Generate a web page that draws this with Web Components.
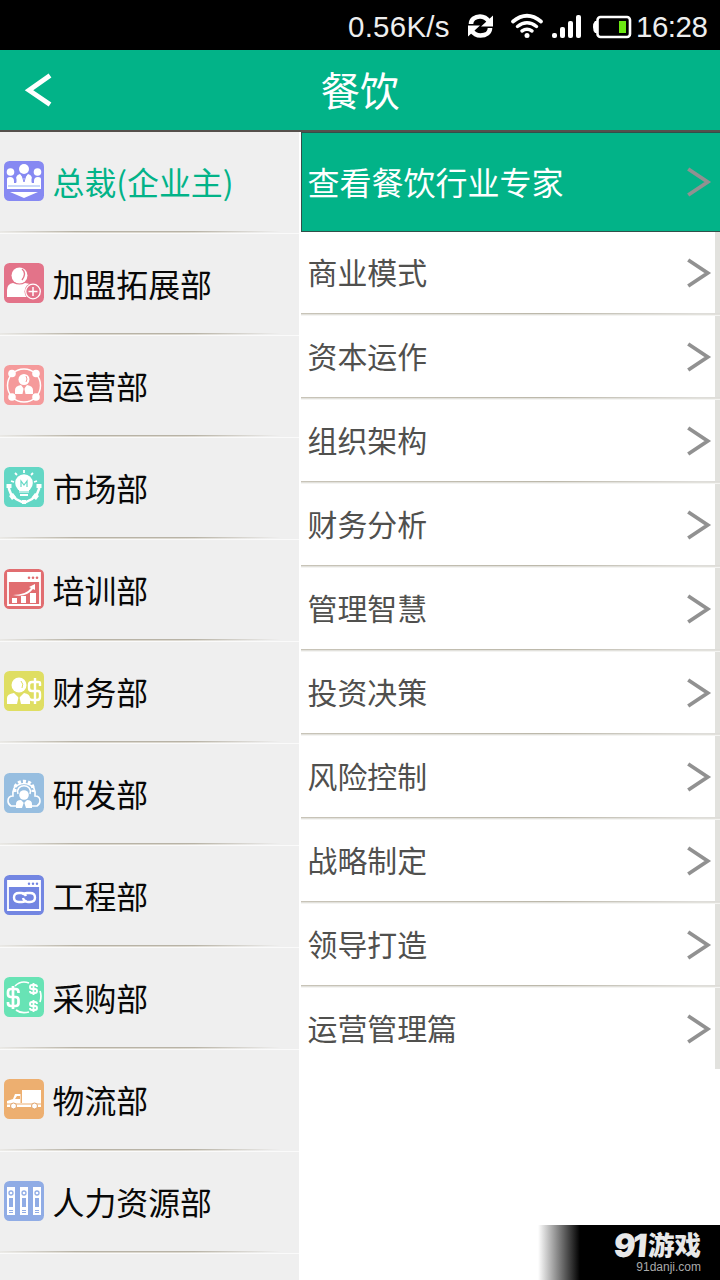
<!DOCTYPE html>
<html lang="zh-CN">
<head>
<meta charset="utf-8">
<title>餐饮</title>
<style>
html,body{margin:0;background:#fff}
body{width:720px;height:1280px;overflow:hidden;font-family:"Noto Sans CJK SC",sans-serif}
</style>
</head>
<body>
<app-screen></app-screen>
<script>
const define = (name, html) => customElements.define(name, class extends HTMLElement {
  constructor() {
    super();
    this.attachShadow({mode: 'open'}).innerHTML = typeof html === 'function' ? html(this) : html;
  }
});

define('status-bar', `<style>
:host{display:flex;height:50px;background:#000;color:#eee;font:29.5px/50px "Liberation Sans",sans-serif;box-sizing:border-box;padding:2px 12px 0 348px;white-space:nowrap}
span{display:block;height:48px}.speed{width:120px;letter-spacing:.25px}.time{width:72px;letter-spacing:-.5px}
svg{display:block;width:168px;height:48px;flex:none}
</style><span class="speed">0.56K/s</span>
<svg viewBox="468 2 168 48"><g fill="none" stroke="#fff">
<path d="M471 24c0-4.500 4-7.500 9-7.500 4 0 7 2 9 5M490 28c0 4.500-4 7.500-9.500 7.500-4 0-7-2-9-5" stroke-width="4.600"/>
<g stroke-linecap="round"><path d="M513 21.500Q527 10 541 21.500" stroke-width="3.800"/><path d="M517.500 26.500Q527 19 536.500 26.500" stroke-width="3.500"/><path d="M522 31Q527 27.500 532 31" stroke-width="3.400"/></g></g>
<g fill="#fff"><path d="M493 15.500v11h-12zM468 36.500V25.500h12z"/><circle cx="527" cy="35.500" r="2.500"/>
<rect x="552" y="33" width="5" height="5" rx="2"/><rect x="560" y="27" width="5" height="11" rx="2"/><rect x="568" y="21" width="5" height="17" rx="2"/><rect x="576" y="15" width="5" height="23" rx="2"/>
<path d="M595 21h3v12h-3q-2-2-2-6t2-6z"/></g><rect x="597.500" y="17" width="32.500" height="20" rx="3" fill="none" stroke="#fff" stroke-width="2.600"/><rect x="619" y="21" width="7" height="12" fill="#6ce813"/></svg>
<span class="time">16:28</span>`);

define('title-bar', `<style>
:host{display:grid;grid-template-columns:80px 1fr 80px;height:82px;box-sizing:border-box;background:#02b388;border-bottom:2px solid #55504c;color:#fff;align-items:start}
h1{margin:0;font-size:39.500px;font-weight:400;line-height:78px;height:80px;text-align:center}
svg{display:block;width:80px;height:80px}
</style><svg viewBox="0 0 80 80"><path d="M50 25.500 29 40.200 50 54.500" fill="none" stroke="#fff" stroke-width="4.800"/></svg><h1><slot></slot></h1>`);

const icons = {
boss: ['#8689f2', `<g fill="#fff"><circle cx="20" cy="8" r="5"/><circle cx="6.500" cy="11" r="3.800"/><circle cx="33.500" cy="11" r="3.800"/><path d="M3 28v-10q0-2 3-2 4 0 4 4v2h2v-4q0-4 4-5l4 5 4-5q4 1 4 5v4h2v-2q0-4 4-4 3 0 3 2v10zM6 31h28l-14 6z"/></g><path d="M12 21.500v-4M28 21.500v-4M18 14l2 7 2-7" stroke="#8689f2" fill="none"/><path d="M4 25h32" stroke="#b9cdf7" stroke-width="1.500"/>`],
join: ['#e37389', `<g fill="#fff"><circle cx="15.500" cy="12.500" r="8"/><path d="M3 34V27q0-6 6-7 7 3 12 0 4 0 7 3v11z"/></g><path d="M18 6q5 4 0 11" fill="none" stroke="#e37389" stroke-width="1.300"/><circle cx="29" cy="28.500" r="8.500" fill="#e37389"/><circle cx="29" cy="28.500" r="7.300" fill="none" stroke="#fff" stroke-width="1.300"/><path d="M24.500 28.500h9M29 24v9" stroke="#fff" stroke-width="1.500"/>`],
operate: ['#f59a9b', `<circle cx="20" cy="20.500" r="16.500" fill="none" stroke="#fff" stroke-width="1.500"/><g fill="#fff"><circle cx="8" cy="8.500" r="3.800"/><circle cx="32" cy="8.500" r="3.800"/><circle cx="8" cy="32" r="3.800"/><circle cx="32" cy="32" r="3.800"/><circle cx="20" cy="14.500" r="5.500"/><path d="M11 29v-4q0-4 6-5l3 4 3-4q6 1 6 5v4z"/></g><path d="m20 22-1.500 7h3z" fill="#f59a9b"/><path d="M22 11q2 3 0 6" fill="none" stroke="#f59a9b"/>`],
market: ['#63d7c5', `<path d="M5 18v4l2 5 5 5 6 3h4l6-3 5-5 2-5v-4" fill="none" stroke="#fff" stroke-width="2.500"/><g fill="#fff"><path d="M2.500 17h5v4h-5zM32.500 17h5v4h-5zM5 29l4-3 3 4-4 3zM28 30l3-4 4 3-3 4zM18 33h4v4h-4zM15 22h10v4H15zM16 27h8v2h-8z"/><circle cx="20" cy="16" r="8.800"/></g><path d="M20 3v3M11 6l2 2M29 6l-2 2M7 14l3 1M33 14l-3 1" stroke="#fff" stroke-width="1.800"/><path d="M17 20v-6l3 4 3-4v6M15 25h10" fill="none" stroke="#63d7c5" stroke-width="1.200"/>`],
train: ['#e16d70', `<path d="M4 4h32v32H4z" fill="none" stroke="#fff" stroke-width="1.800"/><path d="M4 4h32v9H4z" fill="#fff"/><g fill="#e16d70"><circle cx="25" cy="8.800" r="1.300"/><circle cx="29" cy="8.800" r="1.300"/><circle cx="33" cy="8.800" r="1.300"/></g><path d="M8 34v-5h5v5zM17 34v-7h5v7zM26 34V24h6v10z" fill="#fff"/><path d="M9 26q13 0 18-7l-2-1 6-3v6l-2-1q-7 9-20 6z" fill="#fff"/>`],
finance: ['#dfde62', `<g fill="#fff"><circle cx="15" cy="14" r="7.500"/><path d="M3 33v-6q0-4 7-5l5 5 5-5q6 1 6 5v6z"/></g><path d="m15 24-2 9h4z" fill="#dfde62"/><path d="M17 10q3 3 1 7" fill="none" stroke="#dfde62"/><path d="M36 15v-3q0-1-2-1h-6q-3 0-3 3v3q0 3 3 3h6q2 0 2 3v3q0 3-3 3h-5q-2 0-3-2M31 7v26" fill="none" stroke="#fff" stroke-width="2.400"/>`],
research: ['#97bee0', `<path d="M12 33H7q-3-2-3-5 0-5 5-5-1-9 5-11 6-3 12 0 6 2 5 11 5 0 5 5 0 3-3 5h-5" fill="none" stroke="#fff" stroke-width="1.600"/><path d="M11 19C8 5 32 5 29 19" fill="none" stroke="#fff" stroke-width="3.500" stroke-dasharray="3 2"/><path d="M14 21C11 10 29 10 26 21" fill="none" stroke="#fff" stroke-width="1.500"/><g fill="#fff"><circle cx="20" cy="22" r="4.800"/><path d="M12 35v-4q0-4 5-4l3 3 3-3q5 0 5 4v4z"/></g><path d="m20 29-2 6h4z" fill="#97bee0"/>`],
project: ['#7386e2', `<path d="M4 6h32v29H4z" fill="none" stroke="#fff" stroke-width="1.800"/><path d="M4 5h32v7H4z" fill="#fff"/><g fill="#7386e2"><circle cx="25" cy="8.800" r="1.200"/><circle cx="29" cy="8.800" r="1.200"/><circle cx="33" cy="8.800" r="1.200"/></g><g fill="none" stroke="#fff" stroke-width="2.400"><path d="M22 21q-1-3-5-3h-2q-5 0-5 4.500t5 4.500h3q3 0 4-2"/><path d="M19 23q1 4 5 4h2q5 0 5-4.500T26 18h-3q-3 0-4 2"/></g>`],
purchase: ['#68e3b5', `<path d="M11 9Q17 3 25 6M36 14q2 5 0 11M12 33q5 4 13 2" fill="none" stroke="#fff" stroke-width="1.700"/><g fill="none" stroke="#fff"><path d="M14.500 16v-1q0-3-3-3H7q-3 0-3 3v2q0 3 3 3h4.500q3 0 3 3v3q0 3-3 3H7q-3 0-3-3v-1M9 9v23" stroke-width="2.700"/><path d="M33 10q0-2-2-2h-3q-2 0-2 2t2 2h3q2 0 2 2t-2 2h-3q-2 0-2-2M29.500 6v12" stroke-width="1.900"/><path d="M33 27q0-2-2-2h-3q-2 0-2 2t2 2h3q2 0 2 2t-2 2h-3q-2 0-2-2M29.500 23v12" stroke-width="1.900"/></g>`],
logistics: ['#edaf70', `<path d="M18 11h19v13H18zM3 27v-5l6-2 2-5h5.500v9H37v4H3z" fill="#fff"/><path d="m11 20 2-3h3v3z" fill="#edaf70"/><path d="M3 25h34" stroke="#edaf70"/><g fill="#fff" stroke="#dfa36b"><circle cx="9.500" cy="27" r="3"/><circle cx="30.500" cy="27" r="3"/></g>`],
people: ['#90ace5', [3,16,29].map(x=>`<path d="M${x} 6h8v28h-8z" fill="#fff"/><circle cx="${x+4}" cy="12" r="2" fill="none" stroke="#90ace5" stroke-width="1.300"/><path d="M${x+2} 17h4v9h-4zM${x+2} 29h4v1h-4zM${x+2} 31h4v1h-4z" fill="#90ace5"/>`).join('')]
};
define('dept-icon', el => {
  const [color, art] = icons[el.getAttribute('name')];
  return `<style>:host{display:block;width:40px;height:40px;flex:none}svg{display:block}</style><svg width="40" height="40" viewBox="0 0 40 40"><rect width="40" height="40" rx="5.500" fill="${color}"/>${art}</svg>`;
});

define('dept-row', el => `<style>
:host{display:flex;height:102px;flex:none;flex-direction:column;color:#080808}
:host([active]){color:#02b388}
.body{display:flex;box-sizing:border-box;align-items:center;height:99px;padding:0 0 1px 4px;gap:8.500px;font-size:31.900px;white-space:nowrap}
.label{line-height:48px;padding-bottom:1px}
i{display:block;height:1px;background:linear-gradient(90deg,#e9e8e5,#b8b3a6 25%,#b8b3a6 65%,#efefef 94%)}
i+i{background:linear-gradient(90deg,#ecebe8,#dcd8cf 30%,#dcd8cf 60%,#efefef 90%)}
i+i+i{background:#fafafa}
</style><div class="body"><dept-icon name="${el.getAttribute('icon')}"></dept-icon><span class="label"><slot></slot></span></div><i></i><i></i><i></i>`);

define('chevron-right', `<style>:host{display:block;flex:none;width:26px;height:32px}svg{display:block}</style><svg width="26" height="32" viewBox="0 0 26 32"><path d="m1.200 3 19.500 13-19.500 13" fill="none" stroke="#919191" stroke-width="3.800"/></svg>`);

define('expert-row', `<style>
:host{display:flex;box-sizing:border-box;height:100px;border:1px solid #31504a;border-right:0;background:#02b388;color:#fff;align-items:center;justify-content:space-between;padding:0 7px 0 5.500px;font-size:32px;line-height:48px;white-space:nowrap}
span{padding-bottom:3px}
</style><span><slot></slot></span><chevron-right></chevron-right>`);

define('topic-row', `<style>
:host{display:flex;flex-direction:column;height:84px;color:#50504e}
.body{display:flex;height:81px;background:#fff;margin-right:5px;align-items:center;justify-content:space-between;padding:0 2px 0 6.500px;font-size:29.900px;line-height:44px;white-space:nowrap}
span{padding-bottom:3px}
i{display:block;height:1px;background:linear-gradient(90deg,#c8c4b8,#bcb8aa 60%,#deddd9 95%)}
i+i{background:#e2e1dc}
i+i+i{background:#f4f4f2}
:host(:last-of-type) i{visibility:hidden}
</style><div class="body"><span><slot></slot></span><chevron-right></chevron-right></div><i></i><i></i><i></i>`);

define('topic-list', `<style>
:host{display:block;height:837px;overflow:hidden;background:linear-gradient(90deg,#fff 414px,#e2e2de 414px)}
</style><slot></slot>`);

define('site-mark', `<style>
:host{position:absolute;right:0;bottom:0;width:182px;height:55px;box-sizing:border-box;padding:7px 19px 0 0;background:linear-gradient(90deg,#fff,#000 42px);color:#e8e8e8;text-align:right;white-space:nowrap}
.name{display:flex;justify-content:flex-end;align-items:center;height:27px;gap:4px;line-height:27px}
.name span{font-size:26.500px;font-weight:900;height:27px;line-height:24px}
b{font:900 32px/26px Inter,sans-serif;letter-spacing:-3px;transform:skewX(-5deg)}
.url{font:12px/14px "Liberation Sans",sans-serif;color:#aaa;padding-top:1px}
</style><div class="name"><b>91</b><span>游戏</span></div><div class="url">91danji.com</div>`);

const departments = [['boss','总裁(企业主)'],['join','加盟拓展部'],['operate','运营部'],['market','市场部'],['train','培训部'],['finance','财务部'],['research','研发部'],['project','工程部'],['purchase','采购部'],['logistics','物流部'],['people','人力资源部']];
const topics = ['商业模式','资本运作','组织架构','财务分析','管理智慧','投资决策','风险控制','战略制定','领导打造','运营管理篇'];

define('app-screen', `<style>
:host{display:flex;flex-direction:column;position:relative;width:720px;height:1280px;overflow:hidden;background:#fff}
main{display:grid;grid-template-columns:299px 419px;column-gap:2px;flex:1;min-height:0}
nav{display:flex;flex-direction:column;background:#efefef;overflow:hidden}
</style><status-bar></status-bar><title-bar>餐饮</title-bar>
<main><nav>${departments.map(([i,t],n)=>`<dept-row icon="${i}"${n?'':' active'}>${t}</dept-row>`).join('')}</nav>
<section><expert-row>查看餐饮行业专家</expert-row><topic-list>${topics.map(t=>`<topic-row>${t}</topic-row>`).join('')}</topic-list></section></main>
<site-mark></site-mark>`);
</script>
</body>
</html>
